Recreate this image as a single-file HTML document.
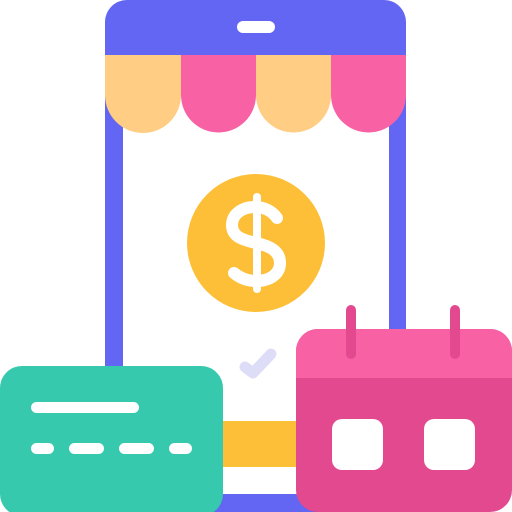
<!DOCTYPE html>
<html><head><style>body{margin:0;background:#fff}svg{display:block}</style></head><body>
<svg width="512" height="512" viewBox="0 0 512 512" xmlns="http://www.w3.org/2000/svg">
<rect x="105" y="0" width="301" height="530" rx="22" fill="#6366F3"/>
<rect x="123" y="55" width="266" height="439" fill="#fff"/>
<rect x="105" y="40" width="301" height="15" fill="#6366F3"/>
<rect x="237" y="21" width="38" height="12" rx="6" fill="#fff"/>
<path d="M105 55h76v40a38 38 0 0 1-76 0z" fill="#FFCD84"/>
<path d="M181 55h75v40a37.5 37.5 0 0 1-75 0z" fill="#F862A5"/>
<path d="M256 55h75v40a37.5 37.5 0 0 1-75 0z" fill="#FFCD84"/>
<path d="M331 55h75v40a37.5 37.5 0 0 1-75 0z" fill="#F862A5"/>
<circle cx="256" cy="243" r="69" fill="#FDBF37"/>
<g stroke="#fff" fill="none" stroke-linecap="round" stroke-linejoin="round">
<line x1="257" y1="197" x2="257" y2="289" stroke-width="8"/>
<path d="M277 218c-5-7-13-11-22-11-14 0-23 8-23 18 0 12 11 15 24 18 14 3 24 8 24 20 0 11-10 18-24 18-9 0-16-3-22-8" stroke-width="12"/>
</g>
<path d="M245 367l8 6 18-19" stroke="#DEDDF7" stroke-width="11" fill="none" stroke-linecap="round" stroke-linejoin="round"/>
<rect x="200" y="421" width="110" height="46" fill="#FDBF37"/>
<rect x="0" y="366" width="223" height="150" rx="22" fill="#37C9AD"/>
<g fill="#fff">
<rect x="31" y="402" width="108" height="11" rx="5.5"/>
<rect x="31" y="443" width="23" height="11" rx="5.5"/>
<rect x="69" y="443" width="35" height="11" rx="5.5"/>
<rect x="119" y="443" width="35" height="11" rx="5.5"/>
<rect x="169" y="443" width="23" height="11" rx="5.5"/>
</g>
<rect x="296" y="329" width="216" height="183" rx="22" fill="#E3498F"/>
<path d="M318 329h172a22 22 0 0 1 22 22v27h-216v-27a22 22 0 0 1 22-22z" fill="#F862A5"/>
<rect x="346" y="305" width="10" height="54" rx="5" fill="#E3498F"/>
<rect x="450" y="305" width="10" height="54" rx="5" fill="#E3498F"/>
<rect x="332" y="419" width="51" height="51" rx="10" fill="#fff"/>
<rect x="424" y="419" width="51" height="51" rx="10" fill="#fff"/>
</svg>
</body></html>
